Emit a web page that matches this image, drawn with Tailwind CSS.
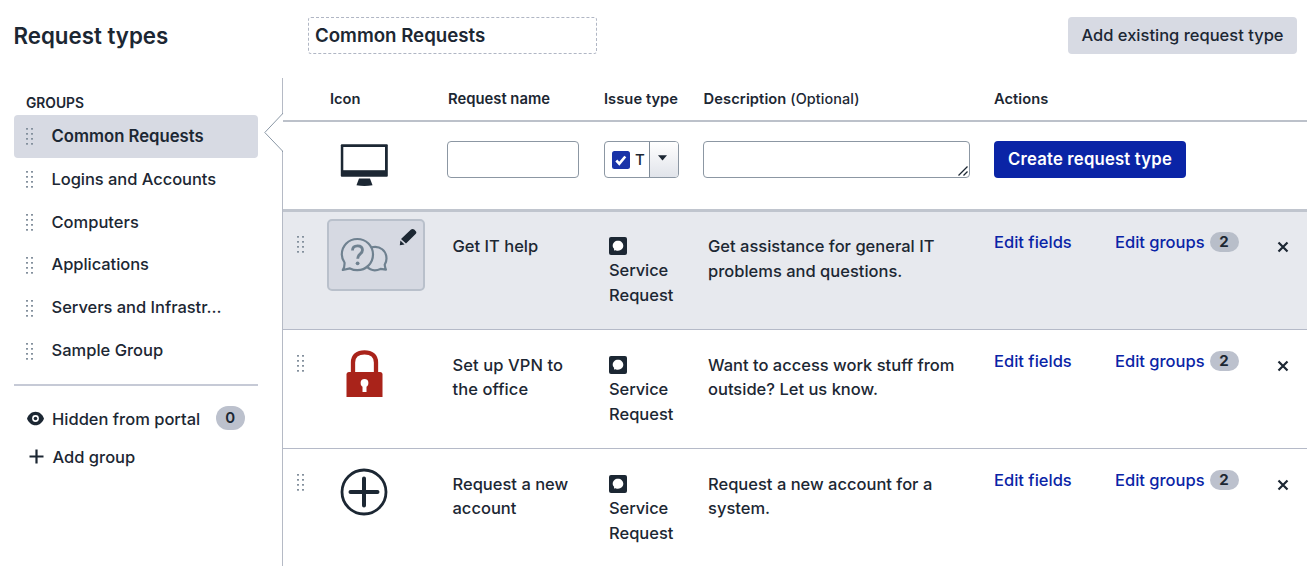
<!DOCTYPE html>
<html lang="en">
<head>
<meta charset="utf-8">
<title>Request types</title>
<script src="https://cdn.jsdelivr.net/npm/@tailwindcss/browser@4"></script>
</head>
<body class="h-[566px] overflow-hidden bg-white font-['Inter',sans-serif] text-[16.5px] font-medium whitespace-nowrap text-[#1c2733]">

<svg class="hidden">
  <symbol id="grip" viewBox="0 0 8 18">
    <g fill="#84909d">
      <rect x="0" y="0" width="2" height="1.700"/><rect x="5" y="0" width="2" height="1.700"/>
      <rect x="0" y="5" width="2" height="1.700"/><rect x="5" y="5" width="2" height="1.700"/>
      <rect x="0" y="10" width="2" height="1.700"/><rect x="5" y="10" width="2" height="1.700"/>
      <rect x="0" y="15" width="2" height="1.700"/><rect x="5" y="15" width="2" height="1.700"/>
    </g>
  </symbol>
  <symbol id="service" viewBox="0 0 18 18">
    <rect width="18" height="18" rx="2" fill="#1c2733"/>
    <path d="M9 3.800c3 0 5.300 2.100 5.300 5S12 13.700 9 13.700c-.9 0-1.700-.1-2.400-.5l-1.600.2.100-1.700C4.100 10.800 3.700 9.900 3.700 8.800c0-2.900 2.300-5 5.300-5z" fill="#fff"/>
  </symbol>
  <symbol id="cross" viewBox="0 0 12 12">
    <path d="M1.500 1.500l9 9M10.500 1.500l-9 9" stroke="#1c2733" stroke-width="2.200" fill="none"/>
  </symbol>
</svg>

<div class="flex h-full">
  <aside class="w-[282px] shrink-0 pl-[13.500px]">
    <h1 class="pt-[20.500px] text-[22.300px] leading-[30px] font-semibold">Request types</h1>
    <h2 class="mt-[42.500px] pl-[12.500px] text-[13.800px] leading-5 font-semibold">GROUPS</h2>
    <ul class="mt-0.5 w-[244px]">
      <li class="flex h-[43px] items-center rounded-[4px] bg-[#d7dae3] pl-[12px] text-[16.700px] font-semibold"><svg class="mr-[18px] h-[18px] w-2"><use href="#grip"/></svg><span class="pt-px">Common Requests</span></li>
      <li class="flex h-[43px] items-center pl-[12px]"><svg class="mr-[18px] h-[18px] w-2"><use href="#grip"/></svg><span class="pb-px tracking-[-0.050px]">Logins and Accounts</span></li>
      <li class="flex h-[43px] items-center pl-[12px]"><svg class="mr-[18px] h-[18px] w-2"><use href="#grip"/></svg><span class="pb-px">Computers</span></li>
      <li class="flex h-[43px] items-center pl-[12px]"><svg class="mr-[18px] h-[18px] w-2"><use href="#grip"/></svg><span class="pb-0.5 tracking-[-0.050px]">Applications</span></li>
      <li class="flex h-[43px] items-center pl-[12px]"><svg class="mr-[18px] h-[18px] w-2"><use href="#grip"/></svg><span class="pb-0.5 tracking-[-0.030px]">Servers and Infrastr...</span></li>
      <li class="flex h-[43px] items-center pl-[12px]"><svg class="mr-[18px] h-[18px] w-2"><use href="#grip"/></svg><span class="pb-0.5">Sample Group</span></li>
    </ul>
    <div class="mt-[11px] w-[244px] border-t-2 border-[#c6cad6]"></div>
    <div class="mt-5 flex h-6 items-center pl-[13.500px]">
      <svg class="mt-px mr-2 h-[15px] w-[17px]" viewBox="0 0 17 15"><path d="M8.500 .7C4.500 .7 1.400 3.600 0 7.500c1.400 3.900 4.500 6.800 8.500 6.800s7.100-2.900 8.500-6.800C15.600 3.600 12.500.7 8.500.7z" fill="#1c2733"/><circle cx="8.500" cy="7.500" r="3.400" fill="#fff"/><circle cx="8.500" cy="7.500" r="1.800" fill="#1c2733"/></svg>
      <span class="mt-0.5">Hidden from portal</span>
      <span class="ml-[15.500px] flex h-6 w-[29px] items-center justify-center rounded-full bg-[#bcc1cd] text-[15px] font-semibold">0</span>
    </div>
    <div class="mt-3.5 flex h-6 items-center pl-[15.500px]">
      <svg class="mr-[8.500px] size-[15px]" viewBox="0 0 15 15"><path d="M7.500 .5v14M.5 7.500h14" stroke="#1c2733" stroke-width="2.200" fill="none"/></svg>
      <span class="pt-0.5">Add group</span>
    </div>
  </aside>

  <main class="flex min-w-0 flex-1 flex-col">
    <header class="flex h-[78px] shrink-0 items-start justify-between pt-[17px] pr-2.5 pl-[26px]">
      <div class="flex h-[37px] w-[289px] items-center rounded-[3px] border border-dashed border-[#b0b6c4] pt-0.5 pl-[6px] text-[18.700px] font-semibold tracking-[-0.020px]">Common Requests</div>
      <button class="h-[37px] w-[229px] rounded-[4px] bg-[#d7dae3]">Add existing request type</button>
    </header>

    <div class="relative flex-1 border-l border-[#b5bac5]">
      <svg class="absolute top-[35px] -left-[19px] h-[39px] w-[20px]" viewBox="0 0 20 39"><path d="M19 .5L.8 19.500 19 38.500h1V.5z" fill="#fff"/><path d="M18.500 0v.8L.8 19.500 18.500 38v1" fill="none" stroke="#8a97a5"/></svg>

      <div class="relative grid h-[44px] grid-cols-[47px_118px_156px_99.500px_290.500px_auto] border-b-2 border-[#bcc1ca] pt-[11px] text-[14.700px] leading-5 font-semibold">
        <span></span><span>Icon</span><span class="text-[14.800px]">Request name</span><span class="tracking-[0.050px]">Issue type</span><span class="tracking-[0.100px]">Description <span class="text-[14.400px] font-medium">(Optional)</span></span><span class="tracking-[0.050px]">Actions</span>
      </div>

      <div class="grid h-[90px] grid-cols-[57px_107px_157px_99px_291px_auto] items-start border-b-3 border-[#c0c5ce] pt-[19px]">
        <span></span>
        <svg class="mt-[3px] h-[43px] w-[48px]" viewBox="0 0 48 43"><rect x=".8" y=".3" width="47" height="32.500" rx="1" fill="#1c2733"/><rect x="3.300" y="3" width="41.700" height="23.200" fill="#fff"/><path d="M19 34.500h11l2.500 6.800q-8.200 1.200-16 0z" fill="#1c2733"/></svg>
        <input class="h-[37px] w-[132px] rounded-[4px] border border-[#8c97a3]" aria-label="Request name">
        <div class="flex h-[37px] w-[75px] overflow-hidden rounded-[4px] border border-[#8c97a3]">
          <div class="flex w-[45px] items-center border-r border-[#7f8b98] pl-[7px]">
            <svg class="size-[18px] shrink-0" viewBox="0 0 18 18"><rect width="18" height="18" rx="2.500" fill="#1a34a8"/><path d="M4.300 9.500l3 3.200 6-7.200" fill="none" stroke="#fff" stroke-width="2.600"/></svg>
            <span class="ml-[5px] pt-0.5 text-[15px]">T</span>
          </div>
          <div class="flex flex-1 justify-center bg-linear-to-b from-white to-[#e1e4ea] pt-[13px] pr-[3px]"><svg class="h-[6px] w-[9px]" viewBox="0 0 9 6"><path d="M0 .3h9L4.500 5.500z" fill="#1c2733"/></svg></div>
        </div>
        <div class="flex h-[37px] w-[267px] items-end justify-end rounded-[4px] border border-[#8c97a3] p-px"><svg class="size-[10px]" viewBox="0 0 10 10"><path d="M.5 9.500l9-9M5.500 9.500l4-4" stroke="#1c2733" stroke-width="1.300" fill="none"/></svg></div>
        <button class="h-[37px] w-[192px] rounded-[4px] bg-[#0a24a6] text-[16.700px] font-semibold tracking-[0.200px] text-white">Create request type</button>
      </div>

      <div class="grid h-[118px] grid-cols-[14px_31px_124.500px_156.500px_99px_286px_121px_162px_auto] items-start border-b border-[#b5bac8] bg-[#e7e9ee] leading-[24.500px]">
        <span></span>
        <svg class="mt-6 h-[18px] w-2"><use href="#grip"/></svg>
        <div class="mt-[7px] -ml-px flex h-[72px] w-[98px] rounded-[5px] border-2 border-[#b9c0cb] bg-[#d6d9e2] pt-4 pl-[11px]">
          <svg class="h-[36px] w-[48px] shrink-0" viewBox="0 0 48 36"><g fill="none" stroke="#6f8190" stroke-width="2.200" stroke-linejoin="round"><path d="M4.500 25.500C2.800 23 1.800 20.500 1.800 17.500 1.800 8.800 8.500 2 17.300 2S33 8.800 33 17.500 26 33.200 17.300 33.200c-2.800 0-5-.6-7.300-1.800L2.800 33q2-2.700 1.700-7.500z"/><path d="M31.500 10.300c8.500-2.300 15 3.800 15 11.200 0 2.500-.8 4.500-1.800 6.200.1 1.500.5 3 1.200 5l-5.400-.8c-5.500 2.500-10.500 1.200-14-2.600"/></g><path d="M12.500 13.500c0-3.200 2-4.700 5-4.700s5 1.600 5 4.300c0 4.300-4.800 3.400-4.800 8.700" fill="none" stroke="#6f8190" stroke-width="2.800"/><circle cx="17.600" cy="26.300" r="1.900" fill="#6f8190"/></svg>
          <svg class="-mt-[9px] ml-[11px] size-[18px] shrink-0" viewBox="0 0 18 18"><path d="M2 11L12 1.600q1.600-1.400 3.200 0l1.400 1.400q1.500 1.500 0 3L7 15.600zM1.400 12.400L5.600 16.600.8 17.200z" fill="#1c2733"/></svg>
        </div>
        <span class="pt-[22px]">Get IT help</span>
        <span class="pt-[22px]"><svg class="mt-[3px] mb-[3px] block size-[18px]"><use href="#service"/></svg><span class="tracking-[-0.100px]">Service</span><br>Request</span>
        <span class="pt-[22px]">Get assistance for general IT<br>problems and questions.</span>
        <a class="pt-[18px] text-[#0a24a6]">Edit fields</a>
        <a class="flex items-center pt-[18px] text-[#0a24a6]">Edit groups<span class="ml-[5px] flex h-[20px] w-[29px] items-center justify-center rounded-full bg-[#b8bec9] text-[15px] font-bold text-[#1c2733]">2</span></a>
        <svg class="mt-[29px] size-3"><use href="#cross"/></svg>
      </div>

      <div class="grid h-[119px] grid-cols-[14px_31px_124.500px_156.500px_99px_286px_121px_162px_auto] items-start border-b border-[#b5bac8] leading-[24.500px]">
        <span></span>
        <svg class="mt-[25px] h-[18px] w-2"><use href="#grip"/></svg>
        <svg class="mt-[19px] ml-[17.500px] h-[48px] w-[37px]" viewBox="0 0 37 48"><path d="M7 23V13.500C7 7 11.500 3.300 18.500 3.300S30 7 30 13.500V23" fill="none" stroke="#a9231a" stroke-width="4.300"/><path d="M3 23h31q2.500 0 2.500 2.500V48H.5V25.500Q.5 23 3 23z" fill="#a9231a"/><circle cx="18.500" cy="34" r="3.900" fill="#fff"/><path d="M16.500 35h4v8h-4z" fill="#fff"/></svg>
        <span class="pt-[22.500px] tracking-[0.080px]">Set up VPN to<br>the office</span>
        <span class="pt-[23px]"><svg class="mt-[3px] mb-[3px] block size-[18px]"><use href="#service"/></svg><span class="tracking-[-0.100px]">Service</span><br>Request</span>
        <span class="pt-[22.500px]">Want to access work stuff from<br>outside? Let us know.</span>
        <a class="pt-[19px] text-[#0a24a6]">Edit fields</a>
        <a class="flex items-center pt-[19px] text-[#0a24a6]">Edit groups<span class="ml-[5px] flex h-[20px] w-[29px] items-center justify-center rounded-full bg-[#bcc1cd] text-[15px] font-bold text-[#1c2733]">2</span></a>
        <svg class="mt-[30px] size-3"><use href="#cross"/></svg>
      </div>

      <div class="grid h-[117px] grid-cols-[14px_31px_124.500px_156.500px_99px_286px_121px_162px_auto] items-start leading-[24.500px]">
        <span></span>
        <svg class="mt-[25px] h-[18px] w-2"><use href="#grip"/></svg>
        <svg class="mt-[19px] ml-3 size-12" viewBox="0 0 48 48"><circle cx="24" cy="24" r="22" fill="none" stroke="#1c2733" stroke-width="2.800"/><path d="M24 10.500v27M10.500 24h27" stroke="#1c2733" stroke-width="4" stroke-linecap="round"/></svg>
        <span class="pt-[22.500px]">Request a new<br>account</span>
        <span class="pt-[23px]"><svg class="mt-[3px] mb-[3px] block size-[18px]"><use href="#service"/></svg><span class="tracking-[-0.100px]">Service</span><br>Request</span>
        <span class="pt-[22.500px]">Request a new account for a<br>system.</span>
        <a class="pt-[19px] text-[#0a24a6]">Edit fields</a>
        <a class="flex items-center pt-[19px] text-[#0a24a6]">Edit groups<span class="ml-[5px] flex h-[20px] w-[29px] items-center justify-center rounded-full bg-[#bcc1cd] text-[15px] font-bold text-[#1c2733]">2</span></a>
        <svg class="mt-[30px] size-3"><use href="#cross"/></svg>
      </div>
    </div>
  </main>
</div>
</body>
</html>
